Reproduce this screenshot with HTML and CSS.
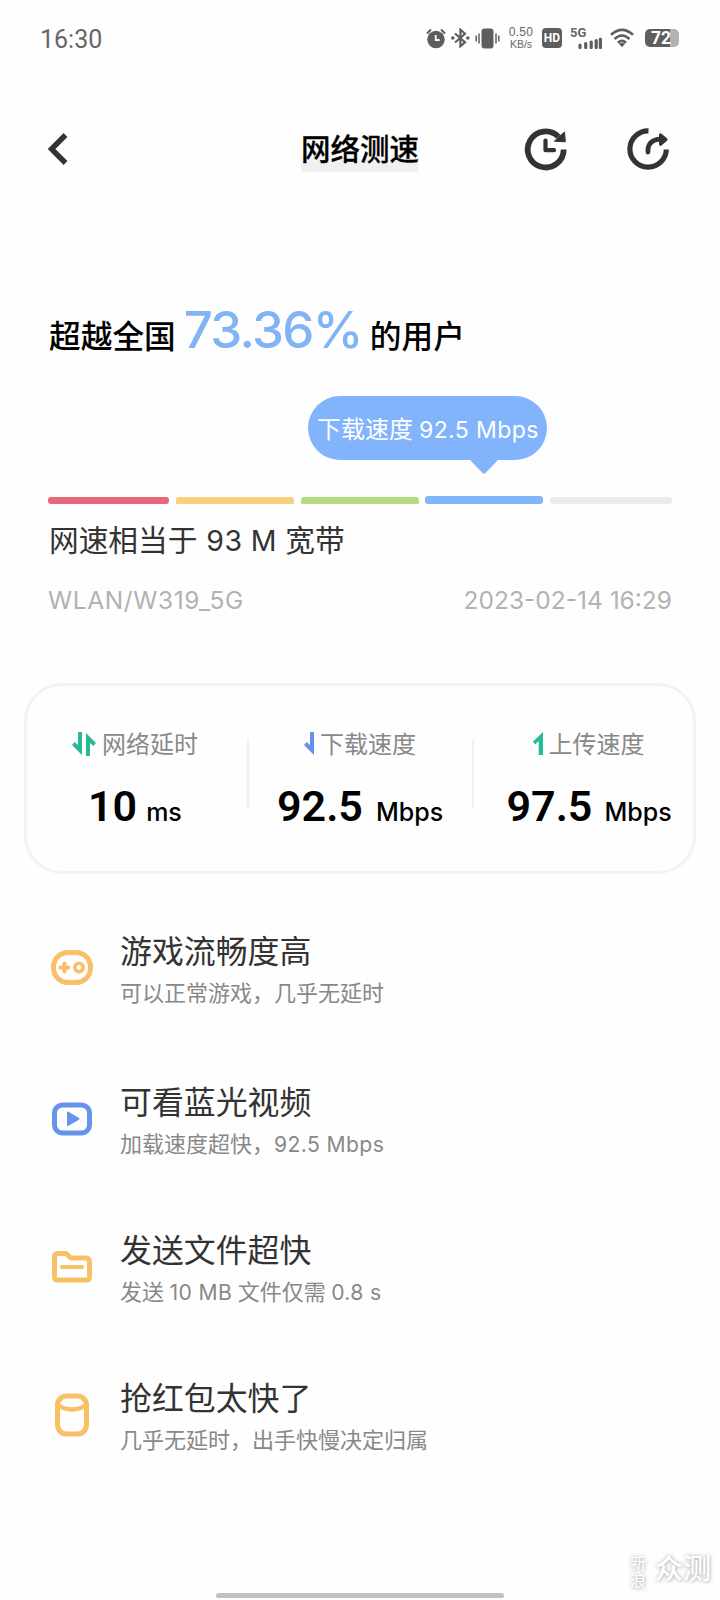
FILE: index.html
```html
<!DOCTYPE html>
<html lang="zh-CN">
<head>
<meta charset="utf-8">
<title>网络测速</title>
<link rel="stylesheet" href="styles.css">
</head>
<body>
<div class="screen">
  <header class="status">
    <span class="time">16:30</span>
    <div class="tray">
      <svg class="i-alarm" width="20" height="21" viewBox="0 0 20 21"><circle cx="10" cy="11.5" r="8.700" fill="#5e5e5e"/><path d="M1 5.500 5 1.500M19 5.500 15 1.500" stroke="#5e5e5e" stroke-width="2"/><path d="M9.700 7v5h4" fill="none" stroke="#fff" stroke-width="1.800"/></svg>
      <svg class="i-bt" width="19" height="20" viewBox="0 0 19 20"><path d="M4 5.500 14 14.200 9.400 18.300V1.700L14 5.800 4 14.500" fill="none" stroke="#5e5e5e" stroke-width="2.200"/><circle cx="1.800" cy="10" r="1.800" fill="#5e5e5e"/><circle cx="16.800" cy="10" r="1.800" fill="#5e5e5e"/></svg>
      <svg class="i-vib" width="25" height="21" viewBox="0 0 25 21"><rect x="6.500" y=".5" width="12" height="20" rx="3" fill="#5e5e5e"/><path d="M1.200 7.500v6M4 5.500v10M21 5.500v10M23.800 7.500v6" stroke="#5e5e5e" stroke-width="1.500"/></svg>
      <div class="rate"><span>0.50</span><span>KB/s</span></div>
      <span class="hd">HD</span>
      <div class="cell"><span>5G</span><svg width="24" height="12" viewBox="0 0 24 12"><path d="M2 8v2.500M7.700 6.500v4M13.200 5v5.500M18.200 3.500v7M22.400 2v8.500" stroke="#5e5e5e" stroke-width="3.200" stroke-linecap="round"/></svg></div>
      <svg class="i-wifi" width="24" height="20" viewBox="0 0 24 20"><path d="M1 6.800Q12-3 23 6.800M4.500 11Q12 4 19.500 11M8 14.800Q12 11 16 14.800" fill="none" stroke="#5e5e5e" stroke-width="2.600"/><path d="m8.900 15.800 3.100 3.400 3.100-3.400Q12 13.800 8.900 15.800Z" fill="#5e5e5e"/></svg>
      <div class="battery"><span>72</span></div>
    </div>
  </header>

  <nav class="nav">
    <svg class="back" width="20" height="32" viewBox="0 0 20 32"><path d="M17.500 2 3.500 16l14 14" fill="none" stroke="#333" stroke-width="5.400"/></svg>
    <h1>网络测速</h1>
    <svg class="history" width="44" height="44" viewBox="0 0 44 44"><path d="M39.700 22.500A18 18 0 1 1 34.500 9.800" fill="none" stroke="#333" stroke-width="5.800"/><path d="m40.500 5 .8 9.800-11-.6Z" fill="#333" stroke="#333" stroke-linejoin="round"/><path d="M21.500 13.500v9.700h8.500" fill="none" stroke="#333" stroke-width="4.200" stroke-linecap="round" stroke-linejoin="round"/></svg>
    <svg class="share" width="44" height="44" viewBox="0 0 44 44"><path d="M21.500 3.800A18.200 18.200 0 1 0 39.300 22.500" fill="none" stroke="#333" stroke-width="5.200"/><path d="M21 25c-.5-8 3.500-12.500 13-12.800" fill="none" stroke="#333" stroke-width="4.800" stroke-linecap="round"/><path d="m33.500 7.800 5.500 4.700-5.500 4.800Z" fill="#333" stroke="#333" stroke-width="3" stroke-linejoin="round"/></svg>
  </nav>

  <main>
    <p class="rank"><span>超越全国</span><strong>73.36%</strong><span>的用户</span></p>
    <div class="bubble">下载速度 <b>92.5 Mbps</b><svg width="32" height="16" viewBox="0 0 32 16"><path d="M1 0h30L17.500 14q-1.500 1.500-3 0Z" fill="#82b4fb"/></svg></div>
    <div class="scale"><i class="red"></i><i class="yellow"></i><i class="green"></i><i class="blue"></i><i class="gray"></i></div>
    <p class="equal">网速相当于 <b>93 M</b> 宽带</p>
    <div class="meta"><span class="ssid">WLAN/W319_5G</span><time>2023-02-14 16:29</time></div>

    <section class="card">
      <div class="stat s1">
        <div class="label"><svg width="24" height="24" viewBox="0 0 24 24"><path d="M6 0h4v23L0 13l2.700-3L6 13ZM14 24V1l10 10-2.700 3L18 11v13Z" fill="#27b996"/></svg>网络延时</div>
        <div class="value"><strong>10</strong><span>ms</span></div>
      </div>
      <div class="stat s2">
        <div class="label"><svg width="10" height="24" viewBox="0 0 10 24"><path d="M6 0h4v23L0 13l2.700-3L6 13Z" fill="#668fe8"/></svg>下载速度</div>
        <div class="value"><strong>92.5</strong><span>Mbps</span></div>
      </div>
      <div class="stat s3">
        <div class="label"><svg width="10" height="24" viewBox="0 0 10 24"><path d="M10 0v23H5.700V9L2 12.500 0 9.500Z" fill="#20bd9b"/></svg>上传速度</div>
        <div class="value"><strong>97.5</strong><span>Mbps</span></div>
      </div>
    </section>

    <ul class="list">
      <li>
        <svg width="44" height="44" viewBox="0 0 44 44"><rect x="3.500" y="6.500" width="37" height="30" rx="14.500" fill="none" stroke="#f8c067" stroke-width="5"/><path d="M10.500 21.500h8M14.500 17.500v8" stroke="#f8c067" stroke-width="4" stroke-linecap="round"/><circle cx="29" cy="21.500" r="4.200" fill="none" stroke="#f8c067" stroke-width="3.600"/></svg>
        <div><h2>游戏流畅度高</h2><p>可以正常游戏，几乎无延时</p></div>
      </li>
      <li>
        <svg width="44" height="44" viewBox="0 0 44 44"><rect x="4.500" y="8" width="35" height="28" rx="8" fill="none" stroke="#6695e8" stroke-width="5"/><path d="M18 15.500v12.500l10.500-6.200Z" fill="#6695e8" stroke="#6695e8" stroke-width="2" stroke-linejoin="round"/></svg>
        <div><h2>可看蓝光视频</h2><p>加载速度超快，<b>92.5 Mbps</b></p></div>
      </li>
      <li>
        <svg width="44" height="44" viewBox="0 0 44 44"><path d="M4.500 12q0-3.500 3.500-3.500h8l5 4.500h14.500q4 0 4 4v15q0 3-3 3h-29q-3 0-3-3Z" fill="none" stroke="#f8c067" stroke-width="5" stroke-linejoin="round"/><path d="M12 22h20" stroke="#f8c067" stroke-width="4.200" stroke-linecap="round"/></svg>
        <div><h2>发送文件超快</h2><p>发送 <b>10 MB</b> 文件仅需 <b>0.8 s</b></p></div>
      </li>
      <li>
        <svg width="44" height="44" viewBox="0 0 44 44"><rect x="7.500" y="3" width="29" height="38" rx="9" fill="none" stroke="#f8c067" stroke-width="5"/><path d="M8 11.500q5 5 14 5t14-5" fill="none" stroke="#f8c067" stroke-width="4.500"/></svg>
        <div><h2>抢红包太快了</h2><p>几乎无延时，出手快慢决定归属</p></div>
      </li>
    </ul>
  </main>
  <div class="watermark"><span class="sina">新浪</span><span class="test">众测</span></div>
  <div class="home"></div>
</div>
</body>
</html>
```
FILE: styles.css
```css
* { box-sizing: border-box; margin: 0; padding: 0; }
body { background: #fefefe; font-family: Roboto, "Noto Sans CJK SC", sans-serif; color: #333; }
svg { display: block; flex: none; }
b { font-family: Inter, sans-serif; font-size: .96em; font-weight: 400; line-height: 1; letter-spacing: .4px; }
.screen { position: relative; width: 720px; height: 1600px; overflow: hidden; background: #fefefe; }

.status { display: flex; height: 80px; padding: 0 39px 0 40px; justify-content: space-between; color: #666; }
.time { font-size: 25px; line-height: 80px; }
.tray { display: flex; width: 255px; height: 80px; margin-top: -2px; align-items: center; }
.i-bt, .i-vib { margin-left: 5px; }
.rate { display: flex; flex-direction: column; align-items: center; width: 26px; margin-left: 8px; font-family: "Liberation Sans", sans-serif; line-height: 12px; white-space: nowrap; }
.rate span { font-size: 10.500px; }
.rate span:first-child { font-size: 12px; letter-spacing: .3px; }
.hd { width: 20px; height: 20px; margin-left: 8px; border-radius: 4px; background: #5e5e5e; color: #fff; font-size: 12px; font-weight: 700; line-height: 20px; text-align: center; }
.cell { position: relative; width: 32px; height: 21px; margin-left: 8px; font-size: 13px; font-weight: 700; line-height: 10px; }
.cell svg { position: absolute; right: 0; bottom: 0; }
.i-wifi { margin-left: 8px; }
.battery { width: 34px; height: 18px; margin-left: 11px; padding-left: 6px; border-radius: 5px; background: linear-gradient(90deg, #5e5e5e 74%, #b2b2b2 74%); color: #fff; font-size: 17.500px; font-weight: 700; line-height: 19px; }

.nav { display: grid; grid-template-columns: 253px 120px 103px 103px 44px; height: 140px; padding-left: 48px; align-items: center; }
.nav svg { margin-top: -3px; }
.nav h1 { width: 117px; height: 44px; font-size: 29.500px; font-weight: 500; line-height: 45px; color: #000; white-space: nowrap; -webkit-text-stroke: .3px #000; background: linear-gradient(transparent 26px, #f0f0f0 34px); }
.nav .history { grid-column: 4; }

.rank { display: flex; align-items: baseline; height: 60px; margin: 80px 0 0 49px; line-height: 60px; font-size: 31.700px; font-weight: 500; color: #000; white-space: nowrap; }
.rank strong { width: 176px; margin: 0 10px 0 8px; color: #82b4f5; font-family: Inter, sans-serif; font-size: 51px; font-weight: 500; line-height: 60px; letter-spacing: -1.700px; }

.bubble { position: relative; width: 239px; height: 64px; margin: 36px 0 0 308px; padding-left: 9px; border-radius: 32px; background: #82b4fb; color: #fff; font-size: 24px; line-height: 68px; white-space: nowrap; }
.bubble svg { position: absolute; left: 160px; top: 63px; }
.scale { display: grid; grid-template-columns: 121px 118px 118px 118px 122px; gap: 6.750px; align-items: end; height: 8px; margin: 36px 0 0 48px; }
.scale i { height: 7px; border-radius: 3px 3px 1px 1px; }
.scale .red { background: #e96679; border-radius: 3px; }
.scale .yellow { background: #f8d17c; }
.scale .green { background: #b5db7f; }
.scale .blue { height: 8px; background: #82b4f8; border-radius: 3px; }
.scale .gray { background: #ebebeb; border-radius: 3px; }
.equal { margin: 17px 0 0 49px; font-size: 29.700px; line-height: 40px; white-space: nowrap; }
.equal b { margin: 0 1px 0 1.500px; }
.meta { display: flex; justify-content: space-between; margin: 18px 48px 0; font-family: Inter, sans-serif; font-size: 24.500px; line-height: 42px; color: #b2b2b2; white-space: nowrap; }
.ssid { letter-spacing: .6px; }

.card { display: grid; grid-template-columns: 222px 224.500px 1fr; width: 672px; height: 191px; margin: 62px 0 0 24px; padding-top: 39px; border: 3px solid #f3f3f3; border-radius: 38px; }
.stat { height: 110px; }
.s1, .s2 { background: linear-gradient(#f1f1f1, #f1f1f1) right 14px / 2px 70px no-repeat; }
.label { display: flex; align-items: center; height: 40px; gap: 6px; font-size: 24px; line-height: 40px; color: #888; white-space: nowrap; }
.label svg { margin-top: -2px; }
.value { display: flex; align-items: baseline; height: 54px; margin-top: 14px; line-height: 54px; color: #000; white-space: nowrap; }
.value strong { font-size: 43px; font-weight: 600; }
.value span { font-family: Inter, sans-serif; font-size: 25px; font-weight: 450; }
.s1 .label { padding-left: 45px; }
.s2 .label { padding-left: 55px; }
.s3 .label { padding-left: 59px; }
.s1 .value { padding-left: 61px; gap: 9px; }
.s2 .value { padding-left: 28px; gap: 13px; }
.s3 .value { padding-left: 33px; gap: 12px; }

.list { margin: 54px 0 0 50px; list-style: none; }
.list li { display: flex; height: 148px; gap: 26px; }
.list li:first-child { height: 151px; }
.list svg { margin-top: 18px; }
.list h2 { font-size: 31.900px; font-weight: 400; line-height: 48px; }
.list p { font-size: 22px; line-height: 36px; color: #888; white-space: nowrap; }

.watermark { position: absolute; right: 9px; bottom: 9px; display: flex; align-items: flex-start; gap: 7px; color: #fff; text-shadow: 0 0 4px #bbb, 1px 1px 3px #ccc; }
.sina { width: 17px; font-size: 16px; line-height: 18px; }
.test { padding-left: 1px; font-size: 28px; font-weight: 500; line-height: 29px; }
.home { position: absolute; left: 216px; top: 1593px; width: 288px; height: 5px; border-radius: 3px; background: #c2c2c2; }
```
